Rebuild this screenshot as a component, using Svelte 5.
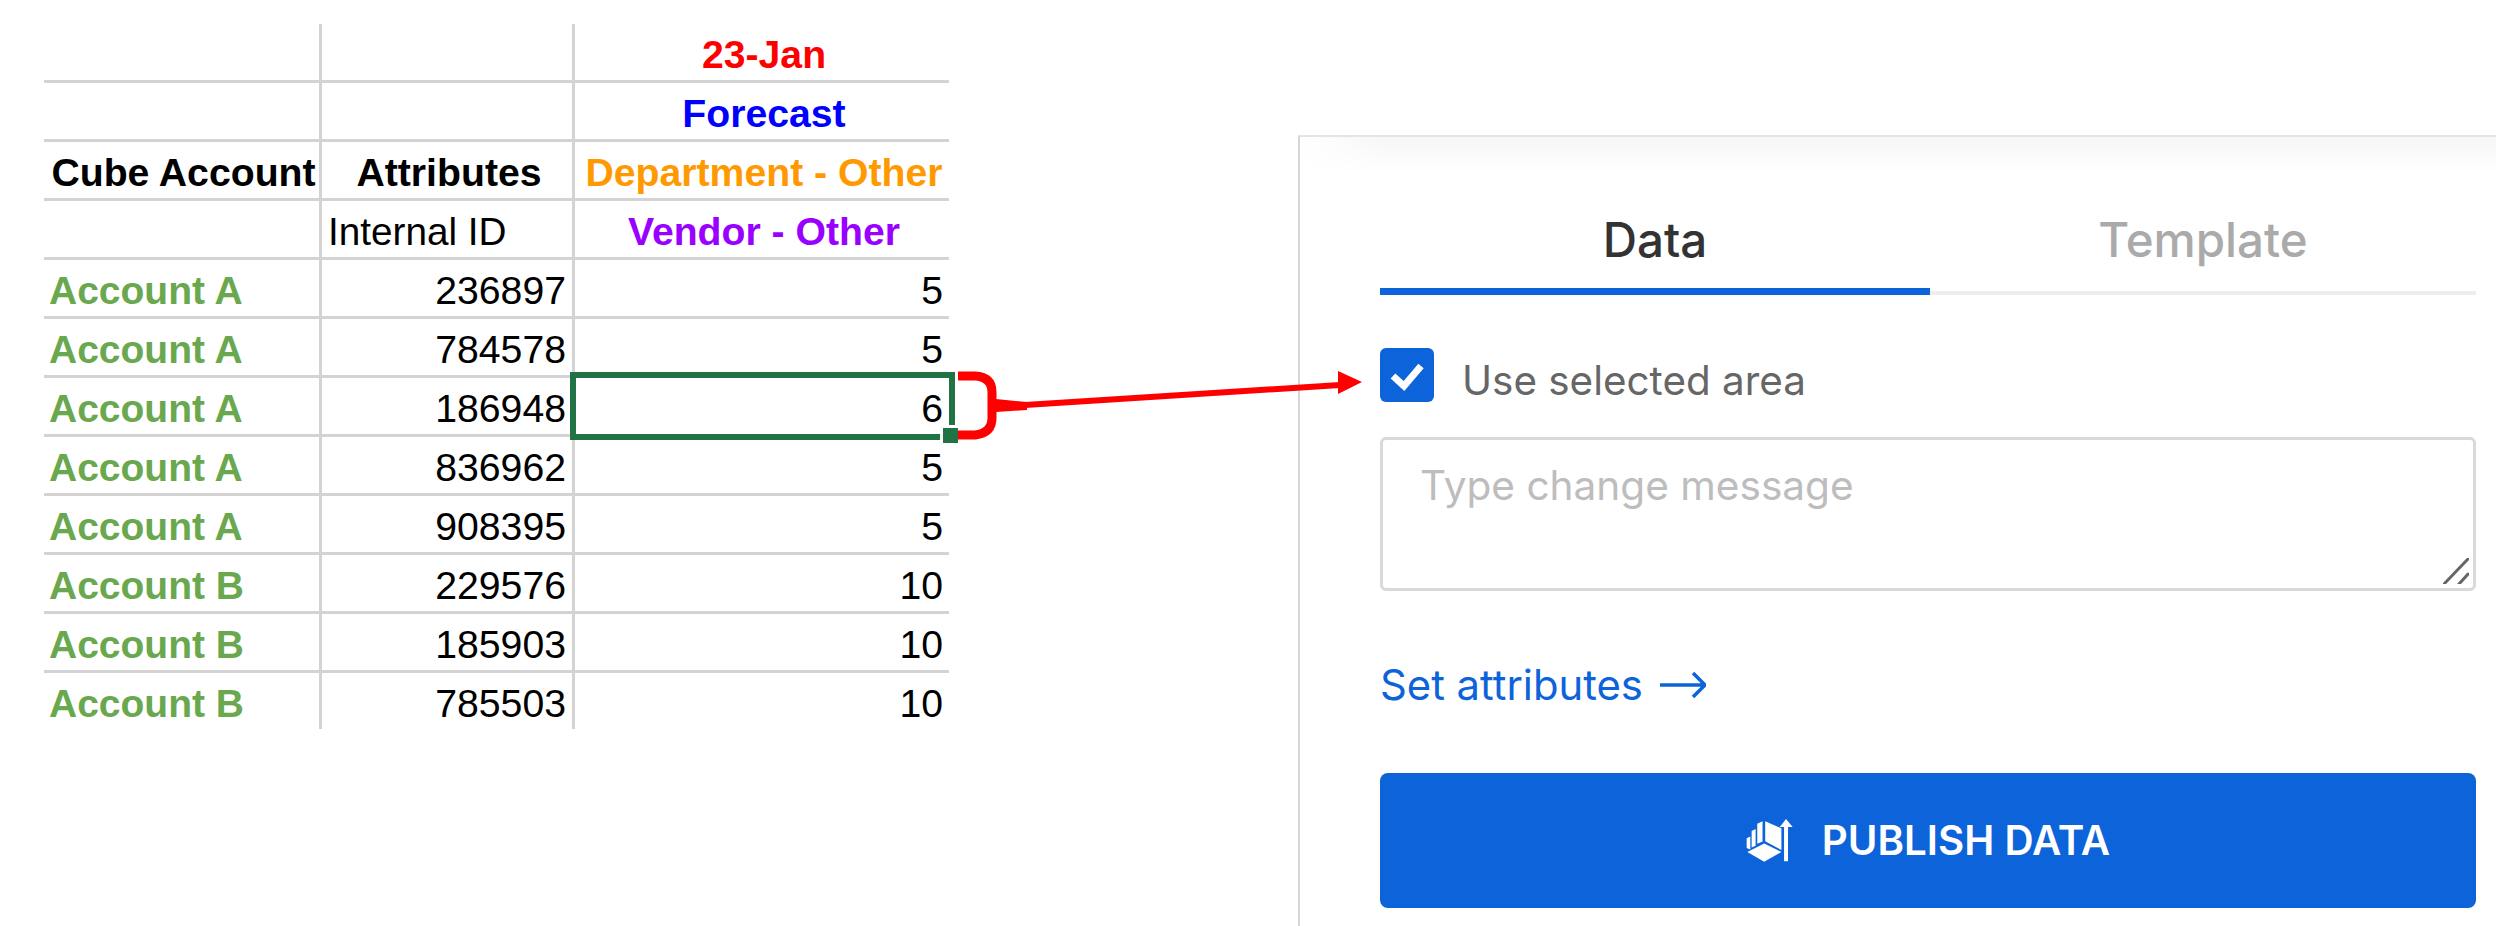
<script>
	const accounts = [
		["Account A", "236897", "5"],
		["Account A", "784578", "5"],
		["Account A", "186948", "6"],
		["Account A", "836962", "5"],
		["Account A", "908395", "5"],
		["Account B", "229576", "10"],
		["Account B", "185903", "10"],
		["Account B", "785503", "10"],
	];
</script>

<div class="page">
	<div class="sheet">
		<div class="cell"></div>
		<div class="cell"></div>
		<div class="cell head red">23-Jan</div>

		<div class="cell"></div>
		<div class="cell"></div>
		<div class="cell head blue">Forecast</div>

		<div class="cell head">Cube Account</div>
		<div class="cell head">Attributes</div>
		<div class="cell head orange">Department - Other</div>

		<div class="cell"></div>
		<div class="cell label">Internal ID</div>
		<div class="cell head purple">Vendor - Other</div>

		{#each accounts as row, i}
			<div class="cell account" class:last={i === accounts.length - 1}>{row[0]}</div>
			<div class="cell num" class:last={i === accounts.length - 1}>{row[1]}</div>
			<div class="cell num" class:last={i === accounts.length - 1}>{row[2]}</div>
		{/each}

		<div class="selection"><span class="handle"></span></div>
	</div>

	<div class="panel">
		<div class="tabs">
			<div class="tab active">Data</div>
			<div class="tab">Template</div>
		</div>

		<div class="use-area">
			<span class="checkbox">
				<svg viewBox="0 0 54 54" width="54" height="54">
					<polyline points="13,28 24,38 41,18" fill="none" stroke="white" stroke-width="7" />
				</svg>
			</span>
			<span class="use-label">Use selected area</span>
		</div>

		<div class="message">
			<textarea placeholder="Type change message"></textarea>
			<svg class="grip" viewBox="0 0 26 26" width="26" height="26">
				<path d="M1 26 L25 1 M16 26 L25 16" stroke="#666" stroke-width="3" stroke-linecap="round" />
			</svg>
		</div>

		<div class="attrs">
			<span>Set attributes</span>
			<svg viewBox="0 0 46 26" width="46" height="26">
				<path d="M0 13 H44 M33 1 L45 13 L33 25" fill="none" stroke="#0d63d9" stroke-width="3.5" />
			</svg>
		</div>

		<button class="publish">
			<svg viewBox="78 178 142 130" width="47" height="43">
				<polygon points="80,236 91,231 91,270 80,266" fill="white" />
				<polygon points="95,214 107,208 107,259 95,264" fill="white" />
				<polygon points="112,192 128,185 128,246 112,253" fill="white" />
				<polygon points="136,185 185,206 185,272 136,245" fill="white" />
				<polygon points="82,278 133,252 185,278 133,307" fill="white" />
				<polygon points="193,202 180,202 199,178 219,202 205,202 205,306 193,306" fill="white" />
			</svg>
			<span>PUBLISH DATA</span>
		</button>
	</div>

	<svg class="callout" viewBox="0 0 2496 926" width="2496" height="926">
		<path d="M958 376 H975 Q992 377 992 392 V418 Q992 433 975 435 H958" fill="none" stroke="#ff0000" stroke-width="9" />
		<polygon points="996,399 1027,402 1027,410 996,412" fill="#ff0000" />
		<line x1="1025" y1="405" x2="1340" y2="385" stroke="#ff0000" stroke-width="6" />
		<polygon points="1338,371 1362,382 1338,394" fill="#ff0000" />
	</svg>
</div>

<style>
	:global(body) {
		background: white;
	}

	.page {
		position: relative;
		display: flex;
		align-items: flex-start;
		width: 2496px;
		height: 926px;
		overflow: hidden;
		background: white;
	}

	.sheet {
		position: relative;
		display: grid;
		grid-template-columns: 278px 253px 374px;
		grid-auto-rows: 59px;
		margin: 24px 0 0 44px;
		font-family: "Liberation Sans", Arial, sans-serif;
		font-size: 39.2px;
		color: black;
	}

	.cell {
		display: flex;
		align-items: center;
		box-sizing: border-box;
		padding: 6px 6px 0 5px;
		border-bottom: 3px solid #d3d3d3;
		border-right: 3px solid #d3d3d3;
		white-space: nowrap;
		overflow: visible;
	}

	.cell:nth-child(3n) {
		border-right: none;
	}

	.cell.last {
		border-bottom: none;
		height: 56px;
	}

	.head {
		justify-content: center;
		padding-left: 8px;
		padding-right: 4px;
		font-weight: bold;
	}

	.label {
		padding-left: 6px;
		font-size: 38.7px;
	}

	.red {
		color: #ff0000;
	}
	.blue {
		color: #0000ff;
	}
	.orange {
		color: #ff9900;
	}
	.purple {
		color: #9900ff;
	}

	.account {
		font-weight: bold;
		font-size: 39px;
		color: #6aa84f;
	}

	.num {
		justify-content: flex-end;
	}

	.selection {
		position: absolute;
		left: 526px;
		top: 348px;
		width: 373px;
		height: 56px;
		border: 6px solid #217346;
	}

	.handle {
		position: absolute;
		right: -9px;
		bottom: -9px;
		width: 15px;
		height: 15px;
		background: #217346;
		outline: 3px solid white;
	}

	.panel {
		display: flex;
		flex-direction: column;
		box-sizing: border-box;
		width: 1198px;
		height: 791px;
		margin: 135px 0 0 auto;
		padding: 0 20px 0 80px;
		border-top: 2px solid #e4e4e4;
		border-left: 2px solid #d6d6d6;
		background:
			linear-gradient(to right, white, transparent 90px),
			linear-gradient(to bottom, #f6f6f6, white 36px);
		font-family: Inter, "Noto Sans", sans-serif;
	}

	.tabs {
		display: flex;
		height: 158px;
		box-sizing: border-box;
		border-bottom: 4px solid #eeeeee;
	}

	.tab {
		flex: 1;
		display: flex;
		align-items: flex-end;
		justify-content: center;
		box-sizing: border-box;
		height: 158px;
		padding-bottom: 27px;
		font-size: 47.5px;
		font-weight: 500;
		color: #aaaaaa;
	}

	.tab.active {
		flex: 0 0 550px;
		padding-bottom: 20px;
		border-bottom: 7px solid #0d63d9;
		color: #333333;
	}

	.use-area {
		display: flex;
		align-items: center;
		gap: 28px;
		height: 54px;
		margin-top: 53px;
		font-size: 40.4px;
		color: #666666;
	}

	.use-label {
		padding-top: 10px;
	}

	.checkbox {
		display: block;
		width: 54px;
		height: 54px;
		border-radius: 6px;
		background: #0d63d9;
	}

	.checkbox svg {
		display: block;
	}

	.message {
		position: relative;
		margin-top: 35px;
		height: 154px;
	}

	textarea {
		display: block;
		box-sizing: border-box;
		width: 100%;
		height: 100%;
		padding: 21px 37px;
		border: 3px solid #d9d9d9;
		border-radius: 6px;
		outline: none;
		resize: none;
		font-family: Inter, "Noto Sans", sans-serif;
		font-size: 40.6px;
		color: #333333;
	}

	textarea::placeholder {
		color: #bdbdbd;
		opacity: 1;
	}

	.grip {
		position: absolute;
		right: 7px;
		bottom: 7px;
	}

	.attrs {
		display: flex;
		align-items: center;
		gap: 17px;
		margin-top: 69px;
		font-size: 41.8px;
		color: #0d63d9;
	}

	.publish {
		display: flex;
		align-items: center;
		justify-content: center;
		gap: 29px;
		height: 135px;
		margin-top: 62.5px;
		padding: 0;
		border: none;
		border-radius: 8px;
		background: #0d63d9;
		font-family: Inter, "Noto Sans", sans-serif;
		font-size: 40.3px;
		font-weight: 600;
		color: white;
	}

	.callout {
		position: absolute;
		left: 0;
		top: 0;
		pointer-events: none;
	}
</style>
